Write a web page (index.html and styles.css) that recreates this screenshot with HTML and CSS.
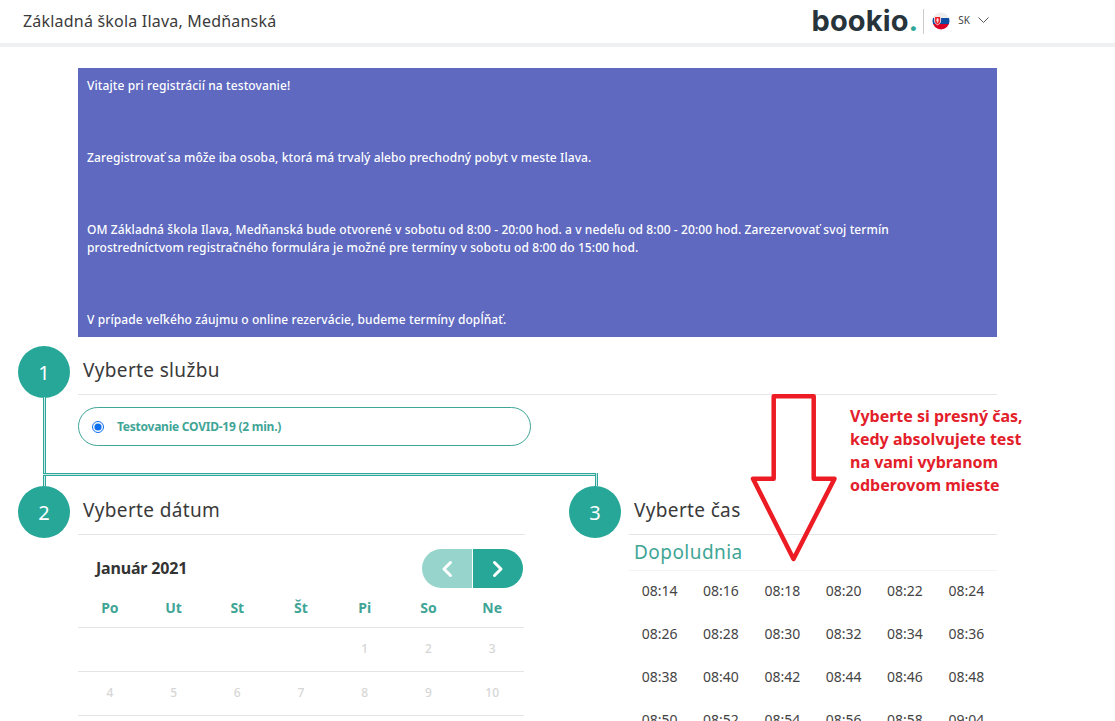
FILE: index.html
```html
<!DOCTYPE html>
<html lang="sk">
<head>
<meta charset="utf-8">
<title>Základná škola Ilava, Medňanská</title>
<link rel="stylesheet" href="styles.css">
</head>
<body>
<header class="topbar">
  <h1 class="shop-name">Základná škola Ilava, Medňanská</h1>
  <div class="brand">
    <span class="logo">bookio<span class="logo-dot">.</span></span>
    <span class="divider"></span>
    <svg class="flag" viewBox="0 0 18 18" width="18" height="18" aria-hidden="true">
      <defs><clipPath id="flagclip"><circle cx="9" cy="9" r="8.5"/></clipPath></defs>
      <g clip-path="url(#flagclip)">
        <rect width="18" height="6" fill="#eeeeee"/>
        <rect y="6" width="18" height="6" fill="#0b4ea2"/>
        <rect y="12" width="18" height="6" fill="#d80027"/>
        <path d="M2.6 4.5h6v4.6c0 2-1.5 3-3 3.7-1.500-.7-3-1.700-3-3.700z" fill="#ee1c25" stroke="#fff" stroke-width=".8"/>
        <path d="M5.600 6v5M4.300 7.300h2.600M4 8.800h3.200" stroke="#fff" stroke-width=".7" fill="none"/>
      </g>
    </svg>
    <span class="lang">SK</span>
    <svg class="chevron" viewBox="0 0 11 6" width="11" height="6" aria-hidden="true"><path d="M.5.5l5 5 5-5" fill="none" stroke="#555" stroke-width="1"/></svg>
  </div>
</header>

<main class="page">
  <section class="banner">
    <p>Vitajte pri registrácií na testovanie!</p>
    <p>Zaregistrovať sa môže iba osoba, ktorá má trvalý alebo prechodný pobyt v meste Ilava.</p>
    <p>OM Základná škola Ilava, Medňanská bude otvorené v sobotu od 8:00 - 20:00 hod. a v nedeľu od 8:00 - 20:00 hod. Zarezervovať svoj termín prostredníctvom registračného formulára je možné pre termíny v sobotu od 8:00 do 15:00 hod.</p>
    <p>V prípade veľkého záujmu o online rezervácie, budeme termíny dopĺňať.</p>
  </section>

  <section class="step step-service">
    <h2 class="step-head"><span class="badge">1</span>Vyberte službu</h2>
    <label class="service">
      <input class="service-radio" type="radio" name="service" checked>
      <span>Testovanie COVID-19 (2 min.)</span>
    </label>
    <span class="link link-down"></span>
    <span class="link link-across"></span>
    <span class="link link-right"></span>
  </section>

  <div class="columns">
    <section class="step step-date">
      <h2 class="step-head"><span class="badge">2</span>Vyberte dátum</h2>
      <div class="cal-top">
        <span class="cal-month">Január 2021</span>
        <div class="cal-nav">
          <button class="cal-btn cal-prev" type="button" aria-label="Predchádzajúci"><svg viewBox="0 0 12 18" width="12" height="18"><path d="M9.500 2.500L3 9l6.500 6.500" fill="none" stroke="#fff" stroke-width="3" stroke-linecap="round" stroke-linejoin="round"/></svg></button>
          <button class="cal-btn cal-next" type="button" aria-label="Nasledujúci"><svg viewBox="0 0 12 18" width="12" height="18"><path d="M2.500 2.500L9 9l-6.500 6.500" fill="none" stroke="#fff" stroke-width="3" stroke-linecap="round" stroke-linejoin="round"/></svg></button>
        </div>
      </div>
      <div class="cal-grid cal-days">
        <span>Po</span><span>Ut</span><span>St</span><span>Št</span><span>Pi</span><span>So</span><span>Ne</span>
      </div>
      <div class="cal-grid cal-week">
        <span></span><span></span><span></span><span></span><span>1</span><span>2</span><span>3</span>
      </div>
      <div class="cal-grid cal-week">
        <span>4</span><span>5</span><span>6</span><span>7</span><span>8</span><span>9</span><span>10</span>
      </div>
    </section>

    <section class="step step-time">
      <h2 class="step-head"><span class="badge">3</span>Vyberte čas</h2>
      <h3 class="period">Dopoludnia</h3>
      <div class="times">
        <span>08:14</span><span>08:16</span><span>08:18</span><span>08:20</span><span>08:22</span><span>08:24</span>
        <span>08:26</span><span>08:28</span><span>08:30</span><span>08:32</span><span>08:34</span><span>08:36</span>
        <span>08:38</span><span>08:40</span><span>08:42</span><span>08:44</span><span>08:46</span><span>08:48</span>
        <span>08:50</span><span>08:52</span><span>08:54</span><span>08:56</span><span>08:58</span><span>09:04</span>
      </div>
    </section>
  </div>

  <svg class="arrow" viewBox="0 0 96 172" width="96" height="172" aria-hidden="true">
    <path d="M23.700 3.300H63.700V85.700H84.500L43.500 166L3 85.700H23.700Z" fill="none" stroke="#ed1c24" stroke-width="4.500" stroke-linejoin="round"/>
  </svg>
  <p class="note">Vyberte si presný čas,<br>kedy absolvujete test<br>na vami vybranom<br>odberovom mieste</p>
</main>
</body>
</html>
```
FILE: styles.css
```css
* { box-sizing: border-box; }
html, body { margin: 0; height: 721px; overflow: hidden; background: #fff; }
body { font-family: "Noto Sans", "Open Sans", sans-serif; color: #3a3a3a; }

.topbar {
  display: flex; align-items: center; justify-content: space-between;
  height: 47px; padding: 0 126px 1px 23px;
  border-bottom: 4px solid #eff0f2;
}
.shop-name { margin: 0; font-size: 16px; font-weight: 400; color: #3b3b3b; letter-spacing: .2px; }
.brand { display: flex; align-items: center; }
.logo { font-family: "Inter", sans-serif; font-weight: 700; font-size: 29px; line-height: 30px; color: #27343c; letter-spacing: .1px; }
.logo-dot { color: #2aa797; }
.divider { width: 1px; height: 25px; background: #ccc; margin: 0 9px 0 5px; }
.flag { display: block; margin-left: -1px; }
.lang { font-size: 10px; margin: -2px 8px 0 8px; color: #444; }
.chevron { display: block; margin-top: -2px; }

.page { position: relative; padding-top: 21px; margin-left: 78px; width: 919px; }

.banner {
  height: 269px; padding: 9px 60px 0 9px;
  background: #5e69bf; color: #fff;
  font-size: 12px; line-height: 18px; font-weight: 500; letter-spacing: .1px;
}
.banner p { margin: 0 0 54px; }

.step { position: relative; }
.step-head {
  position: relative; display: flex; align-items: center;
  height: 48px; margin: 0; padding: 0 0 1px 5px;
  border-bottom: 1px solid #e3e5e6;
  font-size: 19px; font-weight: 400; letter-spacing: .35px; color: #3a3a3a;
}
.step-service { padding-top: 10px; height: 150px; }
.badge {
  position: absolute; left: -60px; top: -1px;
  display: flex; align-items: center; justify-content: center;
  width: 52px; height: 52px; border-radius: 50%;
  background: #27a797; color: #fff;
  font-size: 20px; font-weight: 400; letter-spacing: 0;
}
.service {
  display: flex; align-items: center; gap: 13px;
  width: 453px; height: 39px; margin-top: 12px; padding-left: 13px;
  border: 1px solid #3fa596; border-radius: 20px;
  color: #3fa596; font-size: 12px; font-weight: 700; letter-spacing: -.24px;
}
.service-radio { width: 12px; height: 12px; margin: 0; accent-color: #0b6ff0; }

.link { position: absolute; border: 0 solid #2ba89a; background: #cfeae6; }
.link-down { left: -35px; top: 60px; width: 3px; height: 89px; border-width: 0 1px; }
.link-across { left: -35px; top: 136px; width: 554px; height: 3px; border-width: 1px 0; }
.link-right { left: 517px; top: 136px; width: 3px; height: 13px; border-width: 0 1px; }

.columns { display: flex; gap: 104px; }
.step-date { width: 447px; }
.step-time { width: 368px; }

.cal-top { display: flex; align-items: center; justify-content: space-between; height: 39px; margin-top: 14px; padding: 0 2px 0 18px; }
.cal-month { font-size: 16px; font-weight: 700; color: #333; letter-spacing: -.18px; margin-top: -2px; }
.cal-nav { display: flex; gap: 1px; }
.cal-btn { display: flex; align-items: center; justify-content: center; width: 50px; height: 39px; padding: 0; border: 0; background: #27a797; }
.cal-prev { background: #97d5cc; border-radius: 20px 0 0 20px; }
.cal-next { border-radius: 0 20px 20px 0; }

.cal-grid { display: grid; grid-template-columns: repeat(7, 1fr); width: 446px; align-items: center; justify-items: center; border-bottom: 1px solid #e3e5e6; }
.cal-days { height: 40px; font-size: 14px; font-weight: 700; color: #3fa596; }
.cal-week { height: 44px; padding-bottom: 2px; font-size: 12px; font-weight: 500; color: #d6d6d6; }

.period { display: flex; align-items: center; height: 36px; margin: 0; padding: 0 0 2px 5px; border-bottom: 1px solid #f2f3f3; font-size: 19px; font-weight: 400; letter-spacing: .45px; color: #3fa596; }
.times { display: grid; grid-template-columns: repeat(6, 1fr); grid-auto-rows: 43px; justify-items: center; align-items: center; font-size: 14px; color: #444; }
.times span { padding-bottom: 5px; }

.arrow { position: absolute; left: 672px; top: 346px; }
.note { position: absolute; left: 772px; top: 358px; margin: 0; font-size: 16px; line-height: 23px; font-weight: 700; white-space: nowrap; color: #e3202a; }
```
